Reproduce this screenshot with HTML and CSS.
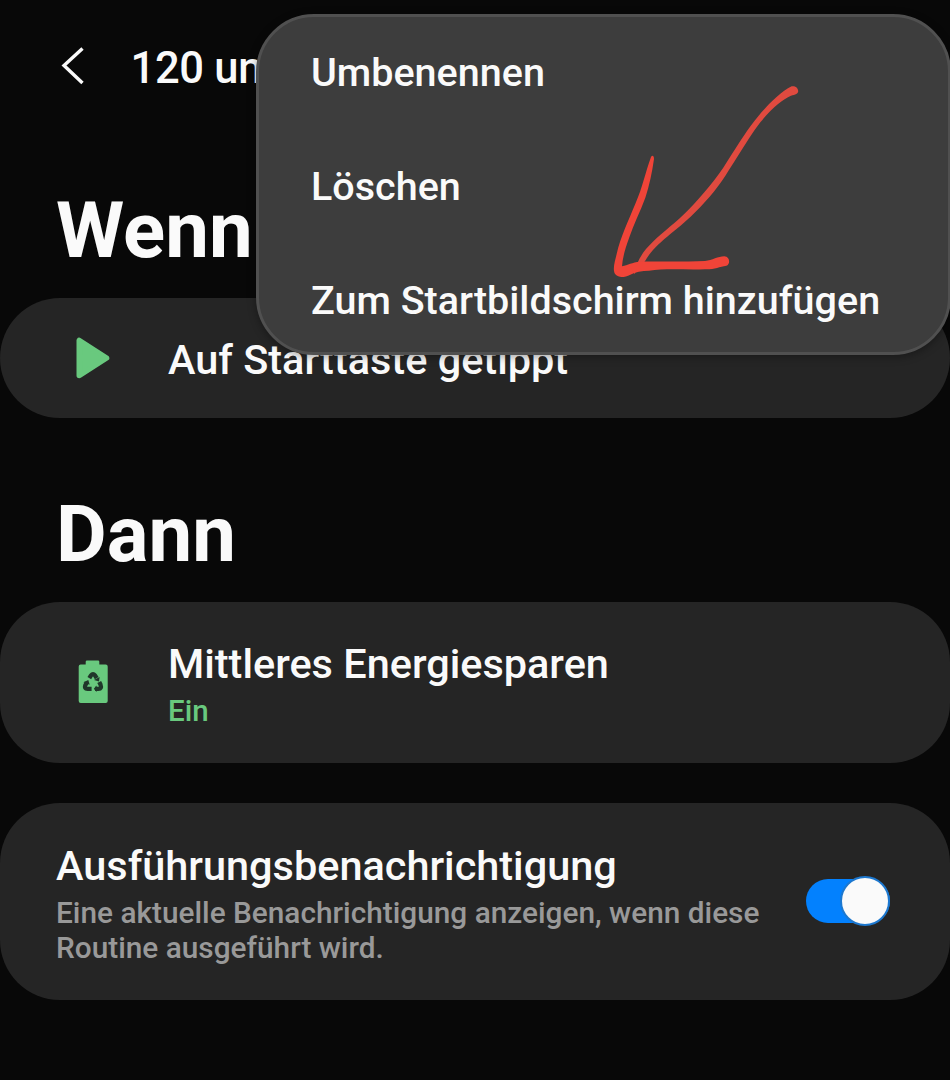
FILE: index.html
```html
<!DOCTYPE html>
<html lang="de">
<head>
<meta charset="utf-8">
<title>Routine</title>
<link rel="stylesheet" href="styles.css">
</head>
<body>
<div class="screen">
  <header class="topbar">
    <svg class="back" width="26" height="40" viewBox="0 0 26 40"><path d="M23.500 2.500 5 19.500 23.500 37" fill="none" stroke="#fafafa" stroke-width="3.400"/></svg>
    <h1 class="topbar-title">120 un</h1>
  </header>

  <h2 class="section section-first">Wenn</h2>
  <section class="card card-trigger">
    <svg class="icon" width="36" height="42" viewBox="0 0 36 42"><path d="M4.300 3.500v35L31.500 21Z" fill="#69c97e" stroke="#69c97e" stroke-width="5.600" stroke-linejoin="round"/></svg>
    <span class="label">Auf Starttaste getippt</span>
  </section>

  <h2 class="section">Dann</h2>
  <section class="card card-action">
    <svg class="icon" width="36" height="44" viewBox="0 0 36 44">
      <path d="M12 .5h11a1.300 1.300 0 0 1 1.300 1.300V4.500H30.700a2 2 0 0 1 2 2v34.500a2 2 0 0 1-2 2h-25a2 2 0 0 1-2-2V6.500a2 2 0 0 1 2-2H10.700V1.800A1.300 1.300 0 0 1 12 .5z" fill="#69c97e"/>
      <g fill="none" stroke="#20372a" stroke-width="4.300" stroke-linejoin="round">
        <path d="M14.300 18.200 16 15.400Q18 13 20 15.400L21.700 18.200"/>
        <path d="M24.200 22.100 25.500 24.600Q27 28.800 23.500 28.800H20"/>
        <path d="M16.600 28.800H12.500Q9 28.800 10.300 25.200L11.800 22.400"/>
      </g>
      <path d="M19 20 24.600 17 24 21.500zM18.800 28.800 21.600 25.600V32zM8.400 22.200 13.300 19.900 14.700 24.800z" fill="#20372a"/>
    </svg>
    <div class="stack">
      <span class="label">Mittleres Energiesparen</span>
      <span class="status">Ein</span>
    </div>
  </section>

  <section class="card card-notify">
    <div class="stack notify-text">
      <span class="label">Ausführungsbenachrichtigung</span>
      <p class="hint">Eine aktuelle Benachrichtigung anzeigen, wenn diese<br>Routine ausgeführt wird.</p>
    </div>
    <div class="toggle"><div class="thumb"></div></div>
  </section>

  <nav class="menu">
    <div class="menu-item">Umbenennen</div>
    <div class="menu-item">Löschen</div>
    <div class="menu-item">Zum Startbildschirm hinzufügen</div>
  </nav>

  <svg class="arrow" width="220" height="220" viewBox="0 0 660 660">
    <path fill="#e04a3f" d="M575 49C588 46 597 57 594 67C589 77 576 74 564 82C535 98 509 123 481 157C457 187 439 219 414 257C387 299 366 337 329 380C293 422 252 460 211 492C180 519 154 539 134 575L112 580C122 556 137 536 158 516C190 485 230 456 264 421C309 374 349 328 382 274C416 220 445 174 476 137C505 103 542 65 575 49Z"/>
    <path fill="#f04438" d="M152 264C155 254 162 256 162 267C156 309 148 346 136 383C120 426 101 463 88 502C75 538 68 562 66 589C84 585 96 577 120 575C173 574 255 576 315 573C337 571 354 559 373 559C391 561 391 583 379 587C358 590 343 599 315 598C258 600 194 595 147 602C126 602 105 606 91 614C74 622 57 625 46 613C36 598 45 575 50 552C62 500 84 455 107 399C127 354 136 308 152 264Z"/>
    <path fill="#f04438" d="M94 596H111L104 612Z"/>
  </svg>
</div>
</body>
</html>
```

FILE: styles.css
```css
* { box-sizing: border-box; }

body {
  margin: 0;
  background: #080808;
  color: #fafafa;
  font-family: Roboto, "Liberation Sans", sans-serif;
  font-weight: 500;
}

.screen {
  position: relative;
  width: 950px;
  height: 1080px;
  overflow: hidden;
}

.topbar {
  display: flex;
  align-items: center;
  height: 136px;
  padding-left: 59px;
}

.back { margin: 0 45.5px 4px 0; }

.topbar-title {
  margin: 0;
  padding-top: 2px;
  font-size: 43.5px;
  font-weight: 500;
  line-height: 60px;
  letter-spacing: -0.3px;
  white-space: nowrap;
}

.section {
  margin: 0;
  padding: 72px 0 22px 56px;
  font-size: 78px;
  font-weight: 700;
  line-height: 90px;
}

.section-first { padding-top: 50px; }

.card {
  display: flex;
  align-items: center;
  background: #252525;
  border-radius: 60px;
}

.card-trigger {
  height: 120px;
  padding: 3px 0 0 75px;
}

.card-trigger .icon { margin: 0 57px 4px 0; }

.card-action {
  height: 161px;
  padding-left: 75px;
}

.card-action .icon { margin: 0 57px 1px 0; }

.card-notify {
  height: 197px;
  margin-top: 40px;
  padding: 0 60px 0 56px;
  justify-content: space-between;
}

.stack {
  display: flex;
  flex-direction: column;
  padding-top: 5px;
}

.label {
  font-size: 41.45px;
  line-height: 50px;
  white-space: nowrap;
}

.status {
  margin-top: 2px;
  color: #69c97e;
  font-size: 29.5px;
  line-height: 40px;
}

.notify-text { padding-top: 3px; }

.hint {
  margin: 4px 0 0;
  color: #999;
  font-size: 29.8px;
  line-height: 35.5px;
  white-space: nowrap;
}

.toggle {
  display: flex;
  align-items: center;
  justify-content: flex-end;
  width: 84px;
  height: 44px;
  margin-bottom: 1px;
  border-radius: 22px;
  background: #0381fe;
}

.thumb {
  flex: none;
  width: 50px;
  height: 50px;
  border: 2.5px solid #1d78cf;
  border-radius: 50%;
  background: #fafafa;
}

.menu {
  position: absolute;
  top: 14px;
  left: 256px;
  width: 695px;
  height: 341px;
  padding: 0 0 0 52px;
  background: #3d3d3d;
  border: 3px solid #505050;
  border-radius: 58px;
  box-shadow: 0 2px 8px rgba(0, 0, 0, 0.35);
}

.menu-item {
  display: flex;
  align-items: center;
  height: 114px;
  padding-bottom: 4px;
  font-size: 39.5px;
  white-space: nowrap;
}

.arrow {
  position: absolute;
  top: 70px;
  left: 600px;
}
```
